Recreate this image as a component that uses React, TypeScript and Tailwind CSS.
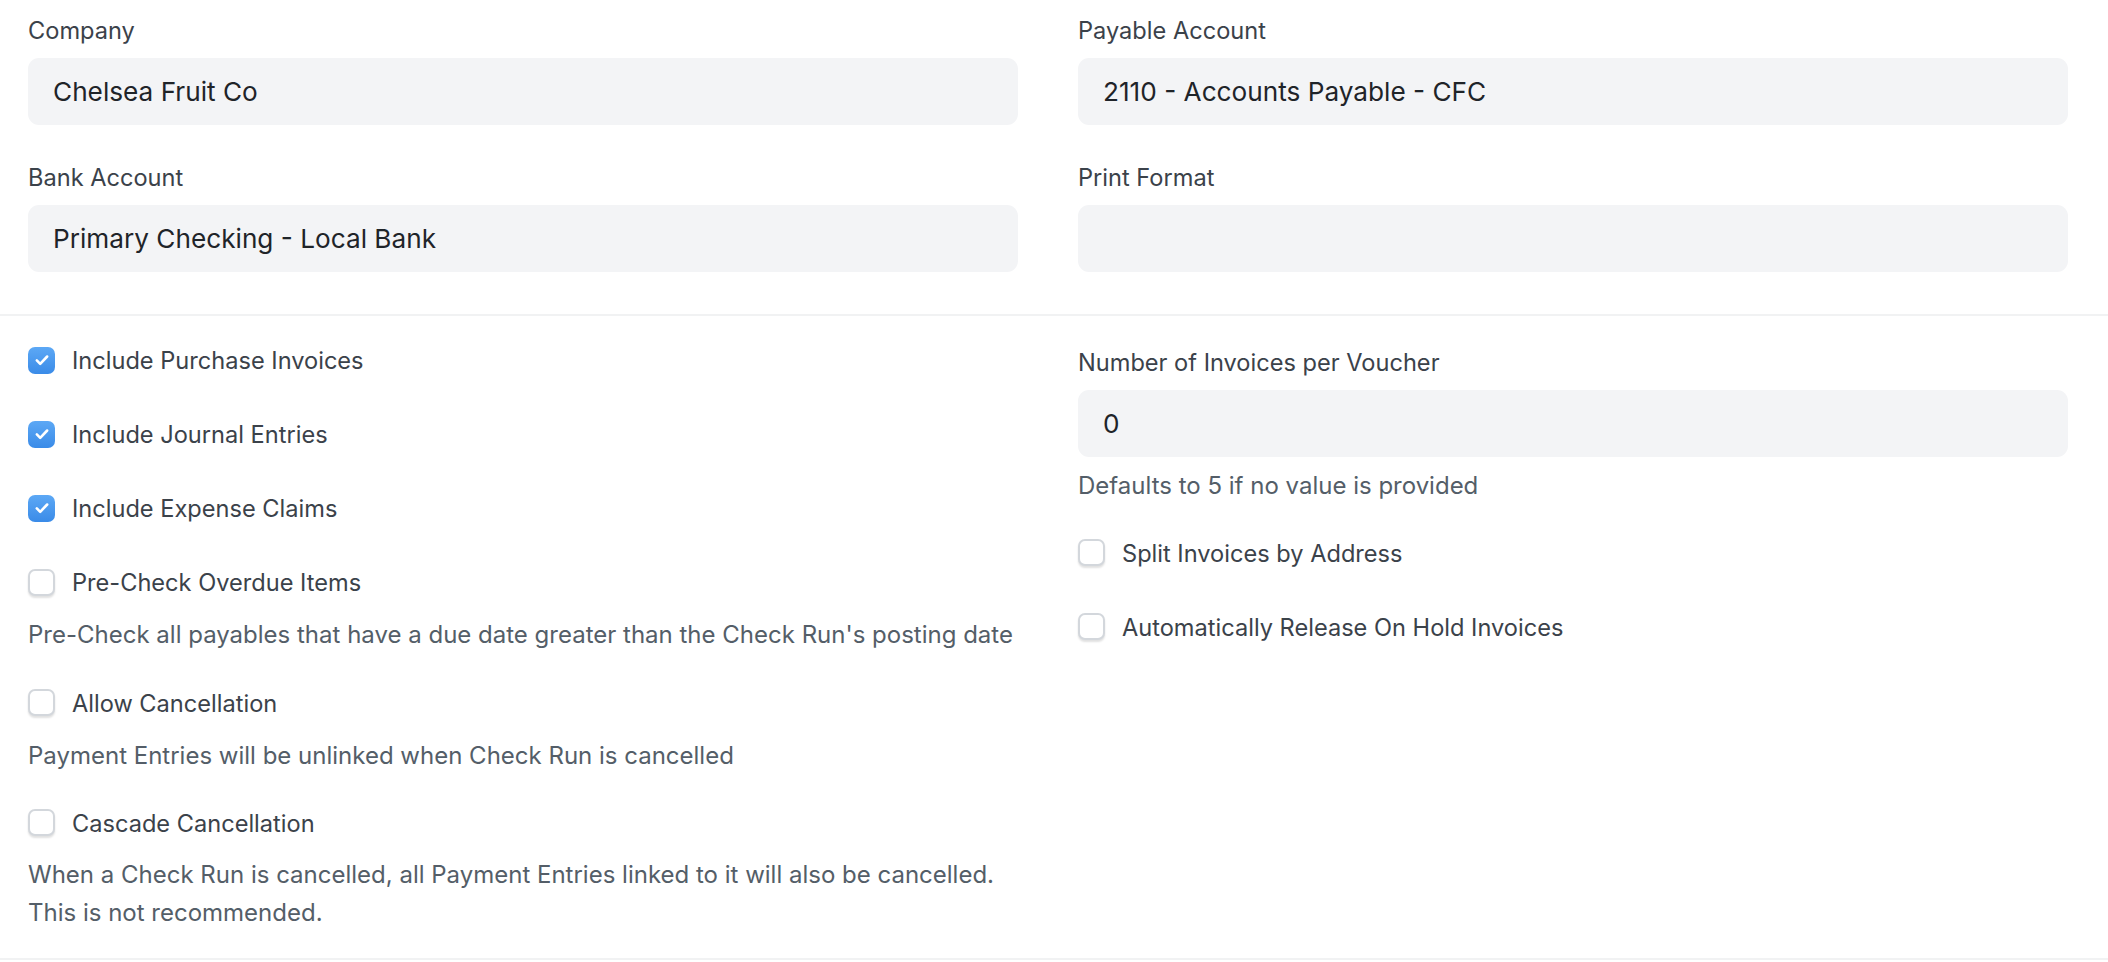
import React from "react";

const Label = ({ children }: { children: React.ReactNode }) => (
    <div className="text-[23.6px] leading-[34px] text-[#3b424a]">{children}</div>
);

const Input = ({ value }: { value?: string }) => (
    <div className="mt-[10px] flex h-[67px] items-center rounded-[11px] bg-[#f3f4f6] px-[25px] text-[26.2px] text-[#1f2429]">
        {value}
    </div>
);

const Help = ({ children }: { children: React.ReactNode }) => (
    <div className="text-[24px] leading-[37.7px] text-[#545e68]">{children}</div>
);

const Check = ({ label, checked }: { label: string; checked?: boolean }) => (
    <div className="flex h-[34px] items-center gap-[17px]">
        {checked ? (
            <div className="flex h-[27px] w-[27px] shrink-0 items-center justify-center rounded-[7px] bg-gradient-to-b from-[#5ca8f5] to-[#3a8be8]">
                <svg width="18" height="18" viewBox="0 0 16 16" fill="none">
                    <path
                        d="M3.4 8.4l3 3L12.6 4.9"
                        stroke="white"
                        strokeWidth="2.3"
                        strokeLinecap="round"
                        strokeLinejoin="round"
                    />
                </svg>
            </div>
        ) : (
            <div className="h-[27px] w-[27px] shrink-0 rounded-[7px] border-2 border-[#d3d7dc] bg-white shadow-[0_2px_2px_rgba(0,0,0,0.12)]" />
        )}
        <span className="pt-[2px] text-[23.6px] text-[#3b424a]">{label}</span>
    </div>
);

export default function App() {
    return (
        <div className="min-h-screen bg-white font-['Inter',sans-serif]">
            <div className="grid grid-cols-2 gap-x-[60px] border-b-2 border-[#f1f2f3] pb-[42px] pl-[28px] pr-[40px] pt-[14px]">
                <div>
                    <Label>Company</Label>
                    <Input value="Chelsea Fruit Co" />
                    <div className="mt-[36px]">
                        <Label>Bank Account</Label>
                        <Input value="Primary Checking - Local Bank" />
                    </div>
                </div>
                <div>
                    <Label>Payable Account</Label>
                    <Input value="2110 - Accounts Payable - CFC" />
                    <div className="mt-[36px]">
                        <Label>Print Format</Label>
                        <Input />
                    </div>
                </div>
            </div>

            <div className="grid grid-cols-2 gap-x-[60px] border-b-2 border-[#f1f2f3] pb-[26px] pl-[28px] pr-[40px] pt-[27px]">
                <div className="flex flex-col">
                    <div className="mb-[40px]">
                        <Check label="Include Purchase Invoices" checked />
                    </div>
                    <div className="mb-[40px]">
                        <Check label="Include Journal Entries" checked />
                    </div>
                    <div className="mb-[40px]">
                        <Check label="Include Expense Claims" checked />
                    </div>
                    <div className="mb-[32px]">
                        <Check label="Pre-Check Overdue Items" />
                        <div className="mt-[17px]">
                            <Help>
                                Pre-Check all payables that have a due date greater than the Check Run's posting date
                            </Help>
                        </div>
                    </div>
                    <div className="mb-[31px]">
                        <Check label="Allow Cancellation" />
                        <div className="mt-[17px]">
                            <Help>Payment Entries will be unlinked when Check Run is cancelled</Help>
                        </div>
                    </div>
                    <div>
                        <Check label="Cascade Cancellation" />
                        <div className="mt-[17px]">
                            <Help>
                                When a Check Run is cancelled, all Payment Entries linked to it will also be cancelled.
                                <br />
                                This is not recommended.
                            </Help>
                        </div>
                    </div>
                </div>
                <div className="flex flex-col pt-[3px]">
                    <Label>Number of Invoices per Voucher</Label>
                    <Input value="0" />
                    <div className="mt-[10px]">
                        <Help>Defaults to 5 if no value is provided</Help>
                    </div>
                    <div className="mt-[31px] mb-[40px]">
                        <Check label="Split Invoices by Address" />
                    </div>
                    <Check label="Automatically Release On Hold Invoices" />
                </div>
            </div>
        </div>
    );
}
